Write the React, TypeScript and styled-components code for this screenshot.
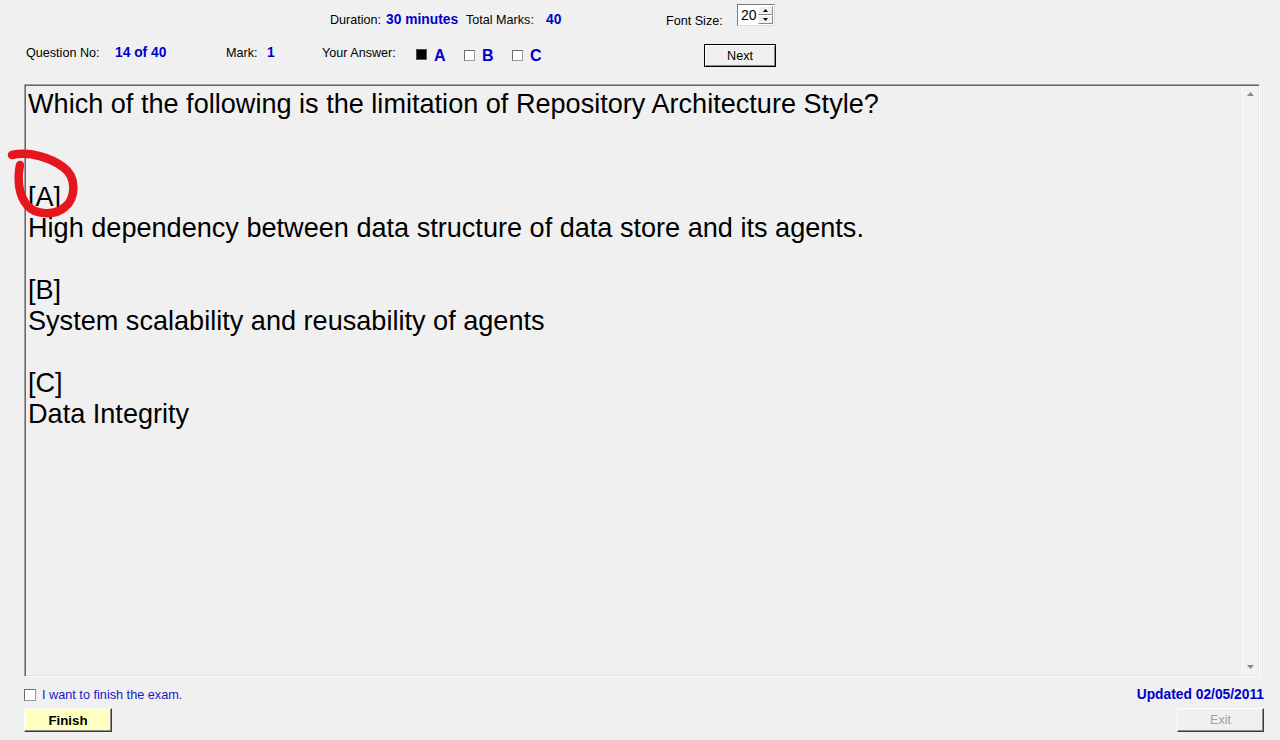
import React from "react";
import styled, { createGlobalStyle } from "styled-components";

const Global = createGlobalStyle`
  html, body { margin: 0; padding: 0; background: #f0f0f0; }
  body {
    font-family: "Liberation Sans", Arial, sans-serif;
    width: 1280px;
    height: 740px;
    overflow: hidden;
  }
`;

const Page = styled.div`
  position: relative;
  width: 1280px;
  height: 740px;
  display: flex;
  flex-direction: column;
  background: #f0f0f0;
`;

const Header = styled.div`
  height: 84px;
  display: flex;
  flex-direction: column;
`;

const Row = styled.div<{ $pl: number; $pt: number; $h: number }>`
  display: flex;
  align-items: flex-start;
  box-sizing: border-box;
  height: ${(p) => p.$h}px;
  padding: ${(p) => p.$pt}px 0 0 ${(p) => p.$pl}px;
`;

const Label = styled.span<{ $w: number; $mt: number }>`
  display: block;
  width: ${(p) => p.$w}px;
  margin-top: ${(p) => p.$mt}px;
  font-size: 12.6px;
  line-height: 16px;
  color: #000;
  white-space: nowrap;
`;

const Value = styled(Label)`
  font-size: 13.8px;
  font-weight: bold;
  color: #0000cd;
`;

const Spinner = styled.div`
  width: 38px;
  height: 22px;
  box-sizing: border-box;
  display: flex;
  align-items: stretch;
  background: #fff;
  border-top: 1px solid #7a7a7a;
  border-left: 1px solid #7a7a7a;
  border-right: 1px solid #dcdcdc;
  border-bottom: 1px solid #dcdcdc;
`;

const SpinValue = styled.span`
  flex: 1;
  padding: 1px 0 0 3px;
  font-size: 14px;
  line-height: 18px;
  color: #000;
`;

const SpinButtons = styled.div`
  width: 15px;
  display: flex;
  flex-direction: column;
  padding: 1px 1px 1px 0;
`;

const SpinBtn = styled.div`
  flex: 1;
  display: flex;
  align-items: center;
  justify-content: center;
  background: #f0f0f0;
  border-top: 1px solid #fff;
  border-left: 1px solid #fff;
  border-right: 1px solid #8a8a8a;
  border-bottom: 1px solid #8a8a8a;
`;

const Options = styled.div`
  display: flex;
  width: 288px;
`;

const Option = styled.div<{ $w: number }>`
  display: flex;
  align-items: flex-start;
  width: ${(p) => p.$w}px;
`;

const Check = styled.span<{ $checked?: boolean; $mt: number }>`
  display: block;
  width: 11px;
  height: 11px;
  box-sizing: border-box;
  margin-top: ${(p) => p.$mt}px;
  background: ${(p) => (p.$checked ? "#000" : "#fff")};
  border: 1px solid ${(p) => (p.$checked ? "#5a5a5a" : "#9a9a9a")};
  border-top-color: ${(p) => (p.$checked ? "#4a4a4a" : "#6e6e6e")};
  border-left-color: ${(p) => (p.$checked ? "#4a4a4a" : "#6e6e6e")};
`;

const Letter = styled.span`
  margin: 3px 0 0 7px;
  font-size: 16px;
  font-weight: bold;
  line-height: 18px;
  color: #0000cd;
`;

const Button = styled.button<{ $w: number; $bg: string; $color: string; $bold?: boolean }>`
  width: ${(p) => p.$w}px;
  height: 24px;
  padding: 0;
  margin: 0;
  box-sizing: border-box;
  background: ${(p) => p.$bg};
  color: ${(p) => p.$color};
  font-family: "Liberation Sans", Arial, sans-serif;
  font-size: ${(p) => (p.$bold ? "13.3px" : "12.6px")};
  font-weight: ${(p) => (p.$bold ? "bold" : "normal")};
  border-top: 1px solid #fdfdfd;
  border-left: 1px solid #fdfdfd;
  border-right: 1px solid #3c3c3c;
  border-bottom: 1px solid #3c3c3c;
  box-shadow: inset -1px -1px 0 #8c8c8c;
  cursor: default;
`;

const NextButton = styled.button`
  width: 72px;
  height: 23px;
  padding: 0;
  margin: 0;
  box-sizing: border-box;
  background: #f0f0f0;
  border: 1px solid #000;
  box-shadow: inset 1px 1px 0 #fff, inset -1px -1px 0 #8c8c8c;
  font-family: "Liberation Sans", Arial, sans-serif;
  font-size: 12.6px;
  color: #000;
`;

const Box = styled.div`
  margin-left: 24px;
  width: 1236px;
  height: 593px;
  box-sizing: border-box;
  display: flex;
  border-top: 1px solid #a0a0a0;
  border-left: 1px solid #a0a0a0;
  border-right: 1px solid #ffffff;
  border-bottom: 1px solid #ffffff;
  box-shadow: inset 1px 1px 0 #696969, inset -1px -1px 0 #e3e3e3;
`;

const Content = styled.div`
  flex: 1;
  padding: 3px 0 0 3px;
  font-size: 27.1px;
  line-height: 31px;
  color: #000;
  white-space: nowrap;
`;

const Line = styled.div`
  height: 31px;
`;

const ScrollBar = styled.div`
  width: 15px;
  margin: 1px 1px 1px 0;
  border-left: 1px solid #fbfbfb;
  background: #f2f2f2;
  display: flex;
  flex-direction: column;
  justify-content: space-between;
  align-items: center;
  padding: 6px 0 6px 0;
`;

const Footer = styled.div`
  display: flex;
  flex-direction: column;
  padding: 0 16px 0 24px;
`;

const FooterRow = styled.div<{ $mt: number }>`
  display: flex;
  align-items: center;
  justify-content: space-between;
  margin-top: ${(p) => p.$mt}px;
`;

const FinishCheck = styled.label`
  display: flex;
  align-items: center;
  font-size: 12.7px;
  line-height: 14px;
  color: #1818c8;
`;

const BigCheck = styled.span`
  display: block;
  width: 12px;
  height: 12px;
  box-sizing: border-box;
  margin-right: 6px;
  background: #fff;
  border: 1px solid #9a9a9a;
  border-top-color: #6e6e6e;
  border-left-color: #6e6e6e;
`;

const Updated = styled.span`
  font-size: 13.8px;
  font-weight: bold;
  color: #0000cd;
  line-height: 16px;
`;

const Annotation = styled.svg`
  position: absolute;
  left: 0;
  top: 140px;
  pointer-events: none;
`;

const Tri = ({ up }: { up?: boolean }) => (
  <svg width="7" height="4" viewBox="0 0 7 4">
    <polygon points={up ? "0,4 7,4 3.5,0" : "0,0 7,0 3.5,4"} fill="#8a8a8a" />
  </svg>
);

const SmallTri = ({ up }: { up?: boolean }) => (
  <svg width="5" height="3" viewBox="0 0 5 3">
    <polygon points={up ? "0,3 5,3 2.5,0" : "0,0 5,0 2.5,3"} fill="#000" />
  </svg>
);

const lines = [
  "Which of the following is the limitation of Repository Architecture Style?",
  "",
  "",
  "[A]",
  "High dependency between data structure of data store and its agents.",
  "",
  "[B]",
  "System scalability and reusability of agents",
  "",
  "[C]",
  "Data Integrity",
];

export default function App() {
  return (
    <Page>
      <Global />
      <Header>
        <Row $pl={330} $pt={4} $h={44}>
          <Label $w={56} $mt={8}>Duration:</Label>
          <Value $w={80} $mt={8}>30 minutes</Value>
          <Label $w={80} $mt={8}>Total Marks:</Label>
          <Value $w={120} $mt={8}>40</Value>
          <Label $w={71} $mt={9}>Font Size:</Label>
          <Spinner>
            <SpinValue>20</SpinValue>
            <SpinButtons>
              <SpinBtn><SmallTri up /></SpinBtn>
              <SpinBtn><SmallTri /></SpinBtn>
            </SpinButtons>
          </Spinner>
        </Row>
        <Row $pl={26} $pt={0} $h={40}>
          <Label $w={89} $mt={1}>Question No:</Label>
          <Value $w={111} $mt={1}>14 of 40</Value>
          <Label $w={41} $mt={1}>Mark:</Label>
          <Value $w={55} $mt={1}>1</Value>
          <Label $w={94} $mt={1}>Your Answer:</Label>
          <Options>
            <Option $w={48}>
              <Check $checked $mt={5} />
              <Letter>A</Letter>
            </Option>
            <Option $w={48}>
              <Check $mt={6} />
              <Letter>B</Letter>
            </Option>
            <Option $w={48}>
              <Check $mt={6} />
              <Letter>C</Letter>
            </Option>
          </Options>
          <NextButton>Next</NextButton>
        </Row>
      </Header>

      <Box>
        <Content>
          {lines.map((l, i) => (
            <Line key={i}>{l}</Line>
          ))}
        </Content>
        <ScrollBar>
          <Tri up />
          <Tri />
        </ScrollBar>
      </Box>

      <Footer>
        <FooterRow $mt={10}>
          <FinishCheck>
            <BigCheck />
            I want to finish the exam.
          </FinishCheck>
          <Updated>Updated 02/05/2011</Updated>
        </FooterRow>
        <FooterRow $mt={5}>
          <Button $w={88} $bg="#ffffc0" $color="#000" $bold>Finish</Button>
          <Button $w={87} $bg="#f0f0f0" $color="#a0a0a0">Exit</Button>
        </FooterRow>
      </Footer>

      <Annotation width="90" height="90" viewBox="0 140 90 90">
        <path
          d="M 12 155 C 30 151, 51 158, 63 167 C 77 177, 76 198, 65 207 C 55 216, 35 215, 27 205 C 19 196, 17 180, 20 165"
          fill="none"
          stroke="#e5161d"
          strokeWidth="8.5"
          strokeLinecap="round"
          strokeLinejoin="round"
        />
      </Annotation>
    </Page>
  );
}
